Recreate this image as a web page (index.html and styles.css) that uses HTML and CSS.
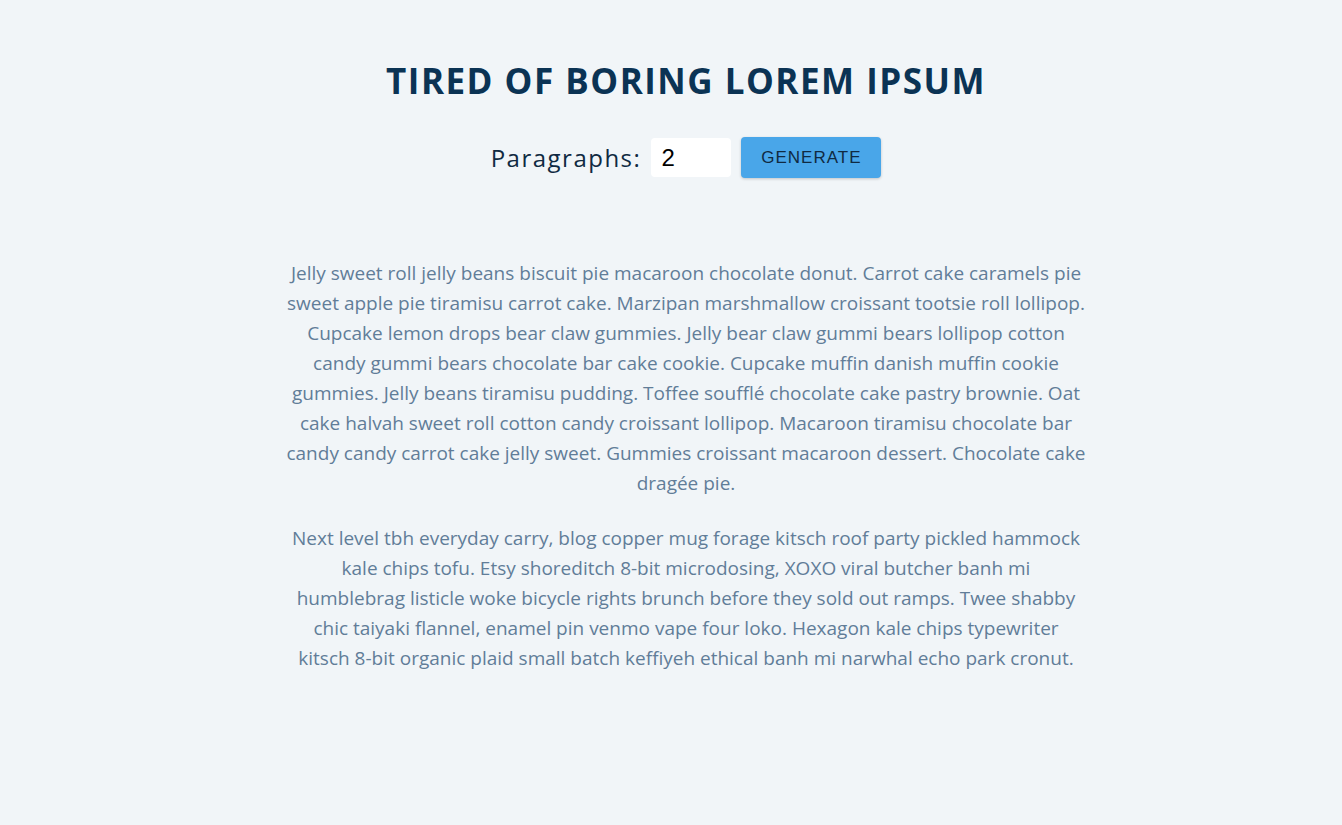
FILE: index.html
```html
<!DOCTYPE html>
<html lang="en">
<head>
<meta charset="utf-8">
<title>Lorem Ipsum Generator</title>
<link rel="stylesheet" href="styles.css">
</head>
<body>
<main class="page">
  <section class="center">
    <h1 class="title">Tired of boring lorem ipsum</h1>
    <form class="lorem-form">
      <label class="label" for="amount">Paragraphs:</label>
      <input class="amount" type="number" id="amount" value="2">
      <button class="btn" type="button">Generate</button>
    </form>
    <article class="lorem-text">
      <p>Jelly sweet roll jelly beans biscuit pie macaroon chocolate donut. Carrot cake caramels pie sweet apple pie tiramisu carrot cake. Marzipan marshmallow croissant tootsie roll lollipop. Cupcake lemon drops bear claw gummies. Jelly bear claw gummi bears lollipop cotton candy gummi bears chocolate bar cake cookie. Cupcake muffin danish muffin cookie gummies. Jelly beans tiramisu pudding. Toffee soufflé chocolate cake pastry brownie. Oat cake halvah sweet roll cotton candy croissant lollipop. Macaroon tiramisu chocolate bar candy candy carrot cake jelly sweet. Gummies croissant macaroon dessert. Chocolate cake dragée pie.</p>
      <p>Next level tbh everyday carry, blog copper mug forage kitsch roof party pickled hammock kale chips tofu. Etsy shoreditch 8-bit microdosing, XOXO viral butcher banh mi humblebrag listicle woke bicycle rights brunch before they sold out ramps. Twee shabby chic taiyaki flannel, enamel pin venmo vape four loko. Hexagon kale chips typewriter kitsch 8-bit organic plaid small batch keffiyeh ethical banh mi narwhal echo park cronut.</p>
    </article>
  </section>
</main>
</body>
</html>
```

FILE: styles.css
```css
* { box-sizing: border-box; }
html, body { margin: 0; padding: 0; }
body {
  background: #f1f5f8;
  font-family: "Open Sans", "Noto Sans", sans-serif;
  color: #102a42;
  min-height: 825px;
}
.page {
  padding-left: 30px;
}
.center {
  width: 800px;
  margin: 0 auto;
  padding-top: 56px;
  text-align: center;
}
.title {
  margin: 0;
  font-size: 35px;
  line-height: 50px;
  font-weight: 700;
  text-transform: uppercase;
  letter-spacing: 1.5px;
  color: #0b3354;
}
.lorem-form {
  display: flex;
  justify-content: center;
  align-items: center;
  margin-top: 31px;
  gap: 0;
}
.label {
  font-size: 24px;
  letter-spacing: 1.5px;
  color: #102a42;
  margin-right: 10px;
}
.amount {
  width: 80px;
  height: 39px;
  border: none;
  border-radius: 4px;
  background: #fff;
  padding: 0 10px;
  font-family: "Liberation Sans", Arial, sans-serif;
  font-size: 24px;
  color: #000;
  margin-right: 10px;
  -moz-appearance: textfield;
}
.amount::-webkit-inner-spin-button,
.amount::-webkit-outer-spin-button { -webkit-appearance: none; margin: 0; }
.btn {
  width: 140px;
  height: 41px;
  border: none;
  border-radius: 4px;
  background: #49a6e9;
  color: #102a42;
  font-family: "Liberation Sans", Arial, sans-serif;
  font-size: 17px;
  letter-spacing: 1px;
  text-transform: uppercase;
  box-shadow: 0 1px 3px rgba(0,0,0,0.2);
  cursor: pointer;
}
.lorem-text {
  margin-top: 80px;
}
.lorem-text p {
  margin: 0 0 25px;
  font-size: 19px;
  line-height: 30px;
  color: #617d98;
}
```
